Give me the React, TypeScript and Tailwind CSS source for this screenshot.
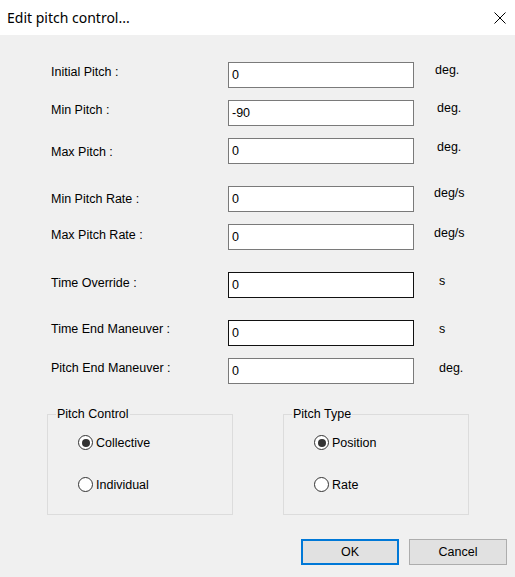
import React from "react";

type Row = {
  label: string;
  value: string;
  unit: string;
  mt: string;
  labelPt: string;
  unitPt: string;
  unitMl: string;
  dark?: boolean;
};

const rows: Row[] = [
  { label: "Initial Pitch :", value: "0", unit: "deg.", mt: "mt-0", labelPt: "pt-[3px]", unitPt: "pt-[1px]", unitMl: "ml-[21px]" },
  { label: "Min Pitch :", value: "-90", unit: "deg.", mt: "mt-[12px]", labelPt: "pt-[3px]", unitPt: "pt-[1px]", unitMl: "ml-[23px]" },
  { label: "Max Pitch :", value: "0", unit: "deg.", mt: "mt-[12px]", labelPt: "pt-[7px]", unitPt: "pt-[2px]", unitMl: "ml-[23px]" },
  { label: "Min Pitch Rate :", value: "0", unit: "deg/s", mt: "mt-[22px]", labelPt: "pt-[6px]", unitPt: "pt-0", unitMl: "ml-[20px]" },
  { label: "Max Pitch Rate :", value: "0", unit: "deg/s", mt: "mt-[12px]", labelPt: "pt-[4px]", unitPt: "pt-[2px]", unitMl: "ml-[20px]" },
  { label: "Time Override :", value: "0", unit: "s", mt: "mt-[22px]", labelPt: "pt-[4px]", unitPt: "pt-[2px]", unitMl: "ml-[25px]", dark: true },
  { label: "Time End Maneuver :", value: "0", unit: "s", mt: "mt-[22px]", labelPt: "pt-[2px]", unitPt: "pt-[2px]", unitMl: "ml-[25px]", dark: true },
  { label: "Pitch End Maneuver :", value: "0", unit: "deg.", mt: "mt-[12px]", labelPt: "pt-[3px]", unitPt: "pt-[3px]", unitMl: "ml-[25px]" },
];

function Radio({ label, checked }: { label: string; checked?: boolean }) {
  return (
    <div className="flex items-center">
      <span className="flex h-[15px] w-[15px] items-center justify-center rounded-full border border-[#333333] bg-white">
        {checked && <span className="h-[8px] w-[8px] rounded-full bg-[#333333]" />}
      </span>
      <span className="ml-[3px] leading-[14px]">{label}</span>
    </div>
  );
}

function Group({ title, options }: { title: string; options: [string, boolean][] }) {
  return (
    <fieldset className="h-[108px] w-[186px] border border-[#dcdcdc] px-0">
      <legend className="ml-[8px] px-[1px] leading-[14px]">{title}</legend>
      <div className="ml-[30px] mt-[14px] flex flex-col gap-[27px]">
        {options.map(([l, c]) => (
          <Radio key={l} label={l} checked={c} />
        ))}
      </div>
    </fieldset>
  );
}

export default function App() {
  return (
    <div className="h-[577px] w-[515px] overflow-hidden bg-[#f0f0f0] font-['Liberation_Sans',Arial,sans-serif] text-[12.5px] text-black">
      <div className="flex h-[35px] items-center justify-between bg-white pl-[7px] pr-[8px]">
        <span className="font-['Noto_Sans',sans-serif] text-[14px] leading-none">Edit pitch control...</span>
        <svg width="12" height="12" viewBox="0 0 12 12" className="mr-[1px]">
          <path d="M0.5 0.5 L11.5 11.5 M11.5 0.5 L0.5 11.5" stroke="#000" strokeWidth="1" />
        </svg>
      </div>

      <div className="pl-[51px] pt-[27px]">
        {rows.map((r) => (
          <div key={r.label} className={`flex items-start ${r.mt}`}>
            <div className={`w-[177px] leading-[14px] ${r.labelPt}`}>{r.label}</div>
            <div
              className={`flex h-[26px] w-[186px] items-center border bg-white pl-[3px] ${
                r.dark ? "border-[#111111]" : "border-[#7a7a7a]"
              }`}
            >
              <span className="leading-[14px]">{r.value}</span>
            </div>
            <div className={`leading-[14px] ${r.unitPt} ${r.unitMl}`}>{r.unit}</div>
          </div>
        ))}
      </div>

      <div className="mt-[23px] flex gap-[50px] pl-[47px]">
        <Group title="Pitch Control" options={[["Collective", true], ["Individual", false]]} />
        <Group title="Pitch Type" options={[["Position", true], ["Rate", false]]} />
      </div>

      <div className="mt-[24px] flex justify-end gap-[10px] pr-[8px]">
        <button className="h-[26px] w-[98px] border-2 border-[#0078d7] bg-[#e1e1e1] leading-[14px]">OK</button>
        <button className="h-[26px] w-[98px] border border-[#adadad] bg-[#e1e1e1] leading-[14px]">Cancel</button>
      </div>
    </div>
  );
}
